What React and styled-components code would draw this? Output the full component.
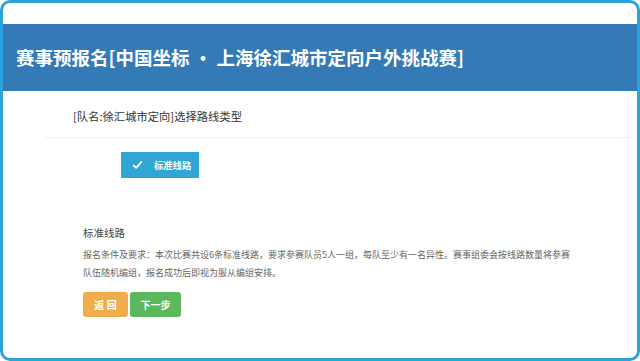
import React from "react";
import styled, { createGlobalStyle } from "styled-components";

const Global = createGlobalStyle`
  html, body { margin: 0; padding: 0; background: #ffffff; }
  body { font-family: "Noto Sans CJK SC", "Noto Sans", "Liberation Sans", sans-serif; }
  * { box-sizing: border-box; }
`;

const Frame = styled.div`
  width: 640px;
  height: 361px;
  border: 3px solid #2ba3df;
  border-radius: 10px;
  overflow: hidden;
  display: flex;
  flex-direction: column;
  background: #fff;
`;

const TopGap = styled.div`
  height: 21px;
  flex: none;
`;

const Header = styled.header`
  height: 67px;
  flex: none;
  background: #337ab7;
  display: flex;
  align-items: center;
  padding: 0 0 0 13px;
`;

const Title = styled.h1`
  margin: 0;
  color: #fff;
  font-size: 18.5px;
  font-weight: 700;
  line-height: 1;
  letter-spacing: 0;
  white-space: nowrap;
`;

const SubHeader = styled.div`
  height: 46px;
  display: flex;
  align-items: center;
  padding: 4px 0 0 70px;
  font-size: 11.3px;
  color: #333;
`;

const Divider = styled.hr`
  margin: 0 5px 0 42px;
  border: 0;
  border-top: 1px solid #f0f0f0;
`;

const OptionRow = styled.div`
  display: flex;
  padding: 14px 0 0 118px;
`;

const RouteButton = styled.button`
  width: 78px;
  height: 26px;
  border: 0;
  border-radius: 0;
  background: #2fa6d6;
  color: #fff;
  display: flex;
  align-items: center;
  padding: 0 0 0 12px;
  gap: 12px;
  font-family: inherit;
  font-size: 9.3px;
  font-weight: 700;
  cursor: pointer;
`;

const Section = styled.section`
  padding: 46px 0 0 80px;
`;

const SectionTitle = styled.h3`
  margin: 0;
  font-size: 10.5px;
  line-height: 18px;
  font-weight: 400;
  color: #444;
`;

const Text = styled.p`
  margin: 4px 0 0;
  width: 492px;
  font-size: 9px;
  line-height: 18px;
  color: #666;
`;

const Actions = styled.div`
  display: flex;
  gap: 2px;
  margin-top: 10px;
`;

const ActionButton = styled.button`
  height: 25px;
  width: ${(p) => p.$w}px;
  border: 0;
  border-radius: 3px;
  background: ${(p) => p.$bg};
  color: #fff;
  font-family: inherit;
  font-size: 10px;
  font-weight: 700;
  padding: 0;
  display: flex;
  align-items: center;
  justify-content: center;
  cursor: pointer;
`;

const Check = () => (
  <svg width="9" height="8" viewBox="0 0 9 8" aria-hidden="true">
    <path d="M0.6 4.4 L3.2 6.8 L8.4 0.8" fill="none" stroke="#fff" strokeWidth="1.9" strokeLinecap="round" strokeLinejoin="round" />
  </svg>
);

export default function App() {
  return (
    <>
      <Global />
      <Frame>
        <TopGap />
        <Header>
          <Title>赛事预报名[中国坐标 · 上海徐汇城市定向户外挑战赛]</Title>
        </Header>
        <SubHeader>[队名:徐汇城市定向]选择路线类型</SubHeader>
        <Divider />
        <OptionRow>
          <RouteButton>
            <Check />
            <span>标准线路</span>
          </RouteButton>
        </OptionRow>
        <Section>
          <SectionTitle>标准线路</SectionTitle>
          <Text>
            报名条件及要求：本次比赛共设6条标准线路，要求参赛队员5人一组，每队至少有一名异性。赛事组委会按线路数量将参赛队伍随机编组，报名成功后即视为服从编组安排。
          </Text>
          <Actions>
            <ActionButton $bg="#f0ad4e" $w={45}>返 回</ActionButton>
            <ActionButton $bg="#5cb85c" $w={51}>下一步</ActionButton>
          </Actions>
        </Section>
      </Frame>
    </>
  );
}
